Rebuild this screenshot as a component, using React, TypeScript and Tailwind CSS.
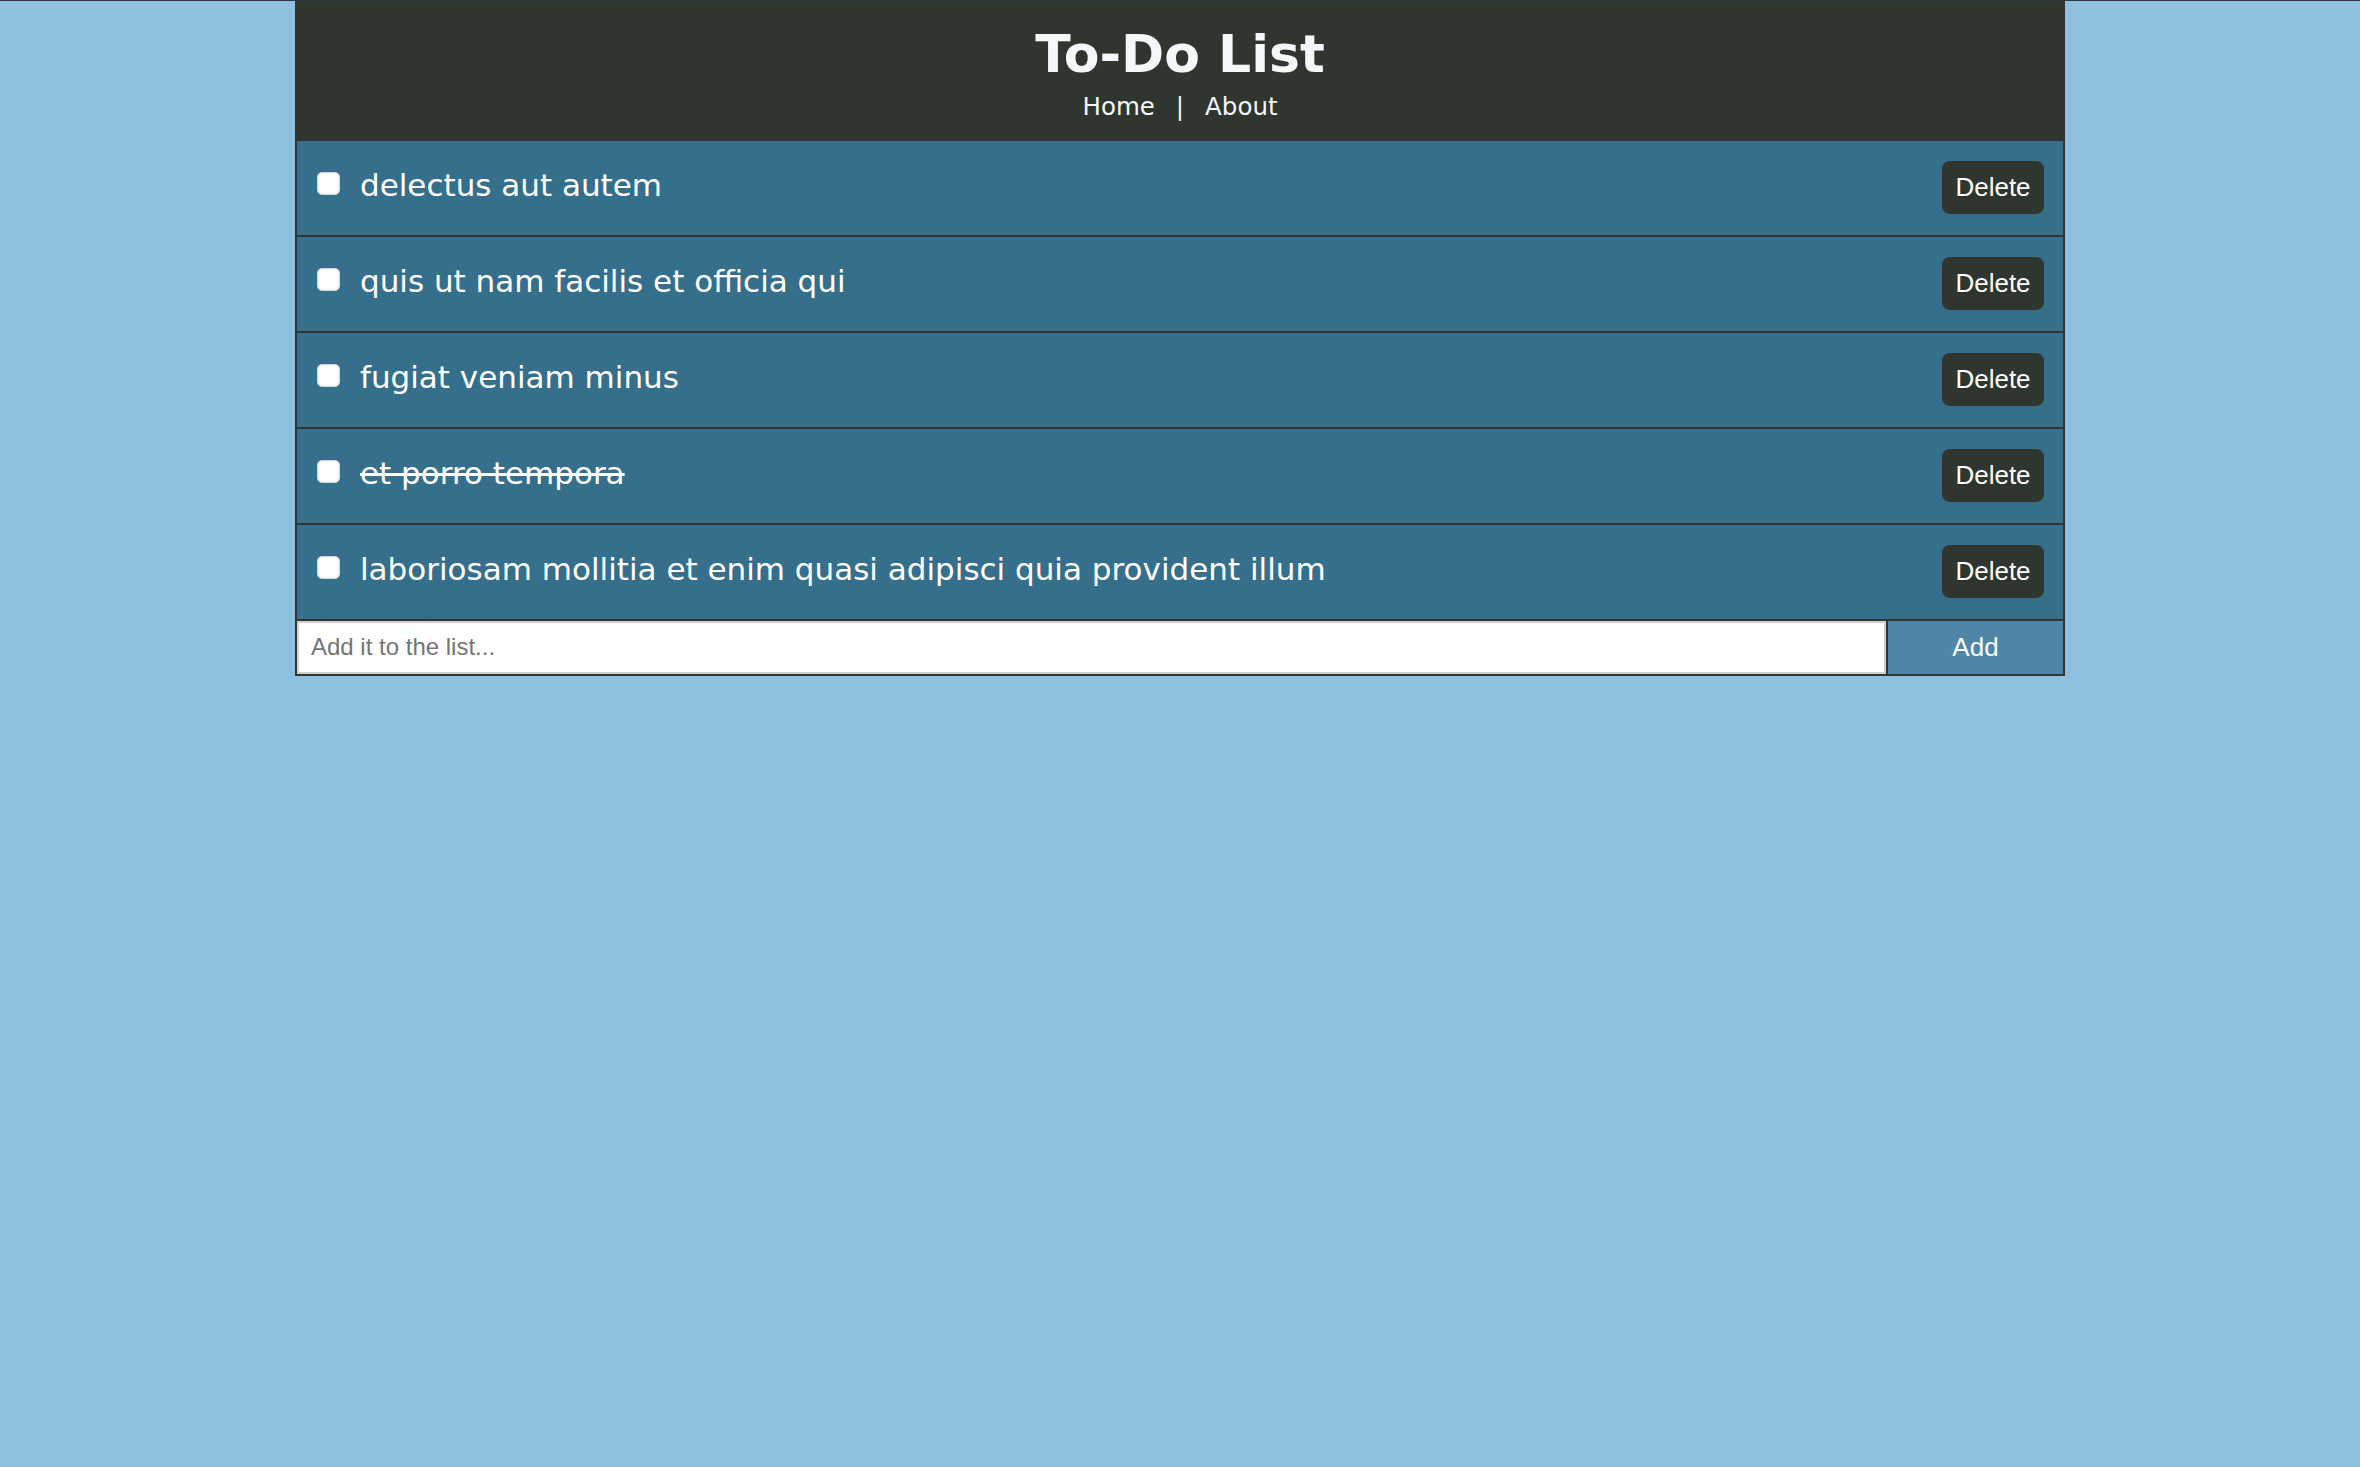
import { useState } from "react";

/* ================= TYPES ================= */

interface Todo {
  id: number;
  title: string;
  completed: boolean;
}

const initialTodos: Todo[] = [
  { id: 1, title: "delectus aut autem", completed: false },
  { id: 2, title: "quis ut nam facilis et officia qui", completed: false },
  { id: 3, title: "fugiat veniam minus", completed: false },
  { id: 4, title: "et porro tempora", completed: true },
  {
    id: 5,
    title: "laboriosam mollitia et enim quasi adipisci quia provident illum",
    completed: false,
  },
];

/* ================= COMPONENT ================= */

export default function App() {
  const [todos, setTodos] = useState<Todo[]>(initialTodos);
  const [text, setText] = useState("");

  const toggle = (id: number) => {
    setTodos(todos.map((t) => (t.id === id ? { ...t, completed: !t.completed } : t)));
  };

  const remove = (id: number) => {
    setTodos(todos.filter((t) => t.id !== id));
  };

  const add = (e: React.FormEvent) => {
    e.preventDefault();
    if (!text.trim()) return;
    setTodos([...todos, { id: Date.now(), title: text, completed: false }]);
    setText("");
  };

  return (
    <div className="min-h-screen bg-[#8fc0e0] border-t border-[#2f3a40]">
      <div className="w-3/4 mx-auto border-x-2 border-b-2 border-[#2f352f] bg-[#2f352f]">
        {/* header */}
        <header className="flex flex-col items-center pt-[27px] pb-[21px] text-[#f5f7f9] font-['DejaVu_Sans',sans-serif]">
          <h1 className="text-[52px] font-bold leading-none">To-Do List</h1>
          <nav className="mt-[15px] flex items-center gap-[21px] text-[24.5px] leading-none">
            <a href="#">Home</a>
            <span>|</span>
            <a href="#">About</a>
          </nav>
        </header>

        {/* list */}
        {todos.map((todo) => (
          <div
            key={todo.id}
            className="flex items-center justify-between h-[96px] pl-5 pr-[19px] bg-[#356f8c] border-b-2 border-[#2f352f]"
          >
            <div className="flex items-center gap-5">
              <input
                type="checkbox"
                checked={false}
                onChange={() => toggle(todo.id)}
                className="appearance-none w-[23px] h-[23px] mb-[8px] bg-white rounded-[5px] border border-[#d8d8d8] shadow-[inset_0_0_2px_rgba(0,0,0,0.15)]"
              />
              <span
                className={
                  todo.completed
                    ? "mb-[5px] text-[31px] leading-[36px] text-white line-through font-['DejaVu_Sans',sans-serif]"
                    : "mb-[5px] text-[31px] leading-[36px] text-white font-['DejaVu_Sans',sans-serif]"
                }
              >
                {todo.title}
              </span>
            </div>
            <button
              onClick={() => remove(todo.id)}
              className="w-[102px] h-[53px] rounded-[8px] bg-[#2f352f] text-white text-[26px] font-['Liberation_Sans',sans-serif]"
            >
              Delete
            </button>
          </div>
        ))}

        {/* add form */}
        <form onSubmit={add} className="flex h-[53px] bg-white">
          <input
            value={text}
            onChange={(e) => setText(e.target.value)}
            placeholder="Add it to the list..."
            className="flex-1 h-full px-[12px] border-2 border-[#cfcfcf] text-[24px] text-[#333] placeholder:text-[#757575] outline-none font-['Liberation_Sans',sans-serif]"
          />
          <button
            type="submit"
            className="w-[177px] h-full bg-[#5085a5] border-l-2 border-[#2f352f] text-white text-[26px] font-['Liberation_Sans',sans-serif]"
          >
            Add
          </button>
        </form>
      </div>
    </div>
  );
}
